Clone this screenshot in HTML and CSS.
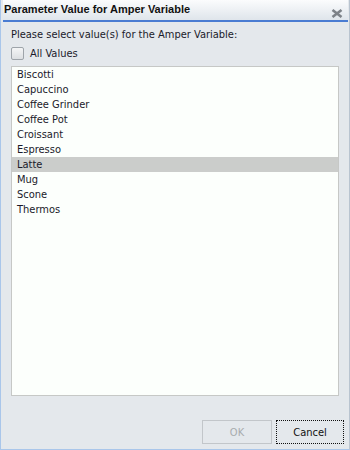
FILE: index.html
```html
<!DOCTYPE html>
<html lang="en">
<head>
	<meta charset="UTF-8">
	<title>Parameter Value for Amper Variable</title>
	<link rel="stylesheet" href="styles.css">
</head>
<body>
	<div class="dialog">
		<div class="title-bar">
			<span class="title">Parameter Value for Amper Variable</span>
			<span class="close">
				<svg width="12" height="9" viewBox="0 0 12 9">
					<path d="M1.5 1 L10.5 8 M10.5 1 L1.5 8" stroke="#7d8288" stroke-width="2.6" fill="none"/>
				</svg>
			</span>
		</div>

		<div class="content">
			<p class="prompt">Please select value(s) for the Amper Variable:</p>
			<label class="all-values">
				<span class="check"></span>
				<span>All Values</span>
			</label>

			<div class="list">
				<div class="item">Biscotti</div>
				<div class="item">Capuccino</div>
				<div class="item">Coffee Grinder</div>
				<div class="item">Coffee Pot</div>
				<div class="item">Croissant</div>
				<div class="item">Espresso</div>
				<div class="item selected">Latte</div>
				<div class="item">Mug</div>
				<div class="item">Scone</div>
				<div class="item">Thermos</div>
			</div>
		</div>

		<div class="buttons">
			<button class="btn ok" disabled>OK</button>
			<button class="btn cancel">Cancel</button>
		</div>
	</div>
</body>
</html>
```

FILE: styles.css
```css
html, body{
	margin: 0;
	padding: 0;
}

body{
	width: 350px;
	height: 450px;
	font-family: "DejaVu Sans Condensed", "DejaVu Sans", sans-serif;
	font-size: 11px;
	color: #1a1a2a;
}

.dialog{
	width: 350px;
	height: 450px;
	box-sizing: border-box;
	display: flex;
	flex-direction: column;
	background: #e4e8ec;
	border-left: 1px solid #a9c6ea;
	border-right: 1px solid #b9c4d0;
	border-bottom: 1px solid #a9c6ea;
}

.title-bar{
	height: 20px;
	flex: none;
	display: flex;
	align-items: center;
	justify-content: space-between;
	padding: 0 5px 0 1px;
	background: linear-gradient(#fbfcfd, #dfe5eb);
	border-bottom: 2px solid #4a7cd2;
	margin: 0 1px 0 2px;
}

.title{
	font-family: "Liberation Sans", Arial, sans-serif;
	font-weight: bold;
	font-size: 11px;
	color: #111;
	margin-top: -3px;
}

.close{
	display: flex;
	margin-top: 7px;
}

.content{
	flex: 1;
	display: flex;
	flex-direction: column;
	padding: 5px 10px 0 10px;
}

.prompt{
	margin: 0;
	height: 16px;
	line-height: 16px;
}

.all-values{
	display: flex;
	align-items: center;
	gap: 6px;
	height: 16px;
	margin-top: 2px;
}

.check{
	width: 11px;
	height: 11px;
	border: 1px solid #9ea4aa;
	border-radius: 2px;
	background: linear-gradient(#f4f5f6, #dcdfe2);
}

.list{
	margin-top: 5px;
	height: 330px;
	width: 328px;
	box-sizing: border-box;
	border: 1px solid #c6c8c6;
	background: #fcfffc;
}

.item{
	height: 15px;
	line-height: 15px;
	padding-left: 5px;
}

.item.selected{
	background: #cbcdcb;
}

.buttons{
	flex: none;
	display: flex;
	justify-content: flex-end;
	gap: 4px;
	padding: 0 5px 5px 0;
}

.btn{
	height: 24px;
	font-family: "DejaVu Sans Condensed", "DejaVu Sans", sans-serif;
	font-size: 11px;
	background: #e4e8ec;
	padding: 0;
}

.ok{
	width: 70px;
	border: 1px solid #c2c6ca;
	color: #a8abae;
}

.cancel{
	width: 68px;
	border: 1px dotted #111;
	color: #111;
}
```
